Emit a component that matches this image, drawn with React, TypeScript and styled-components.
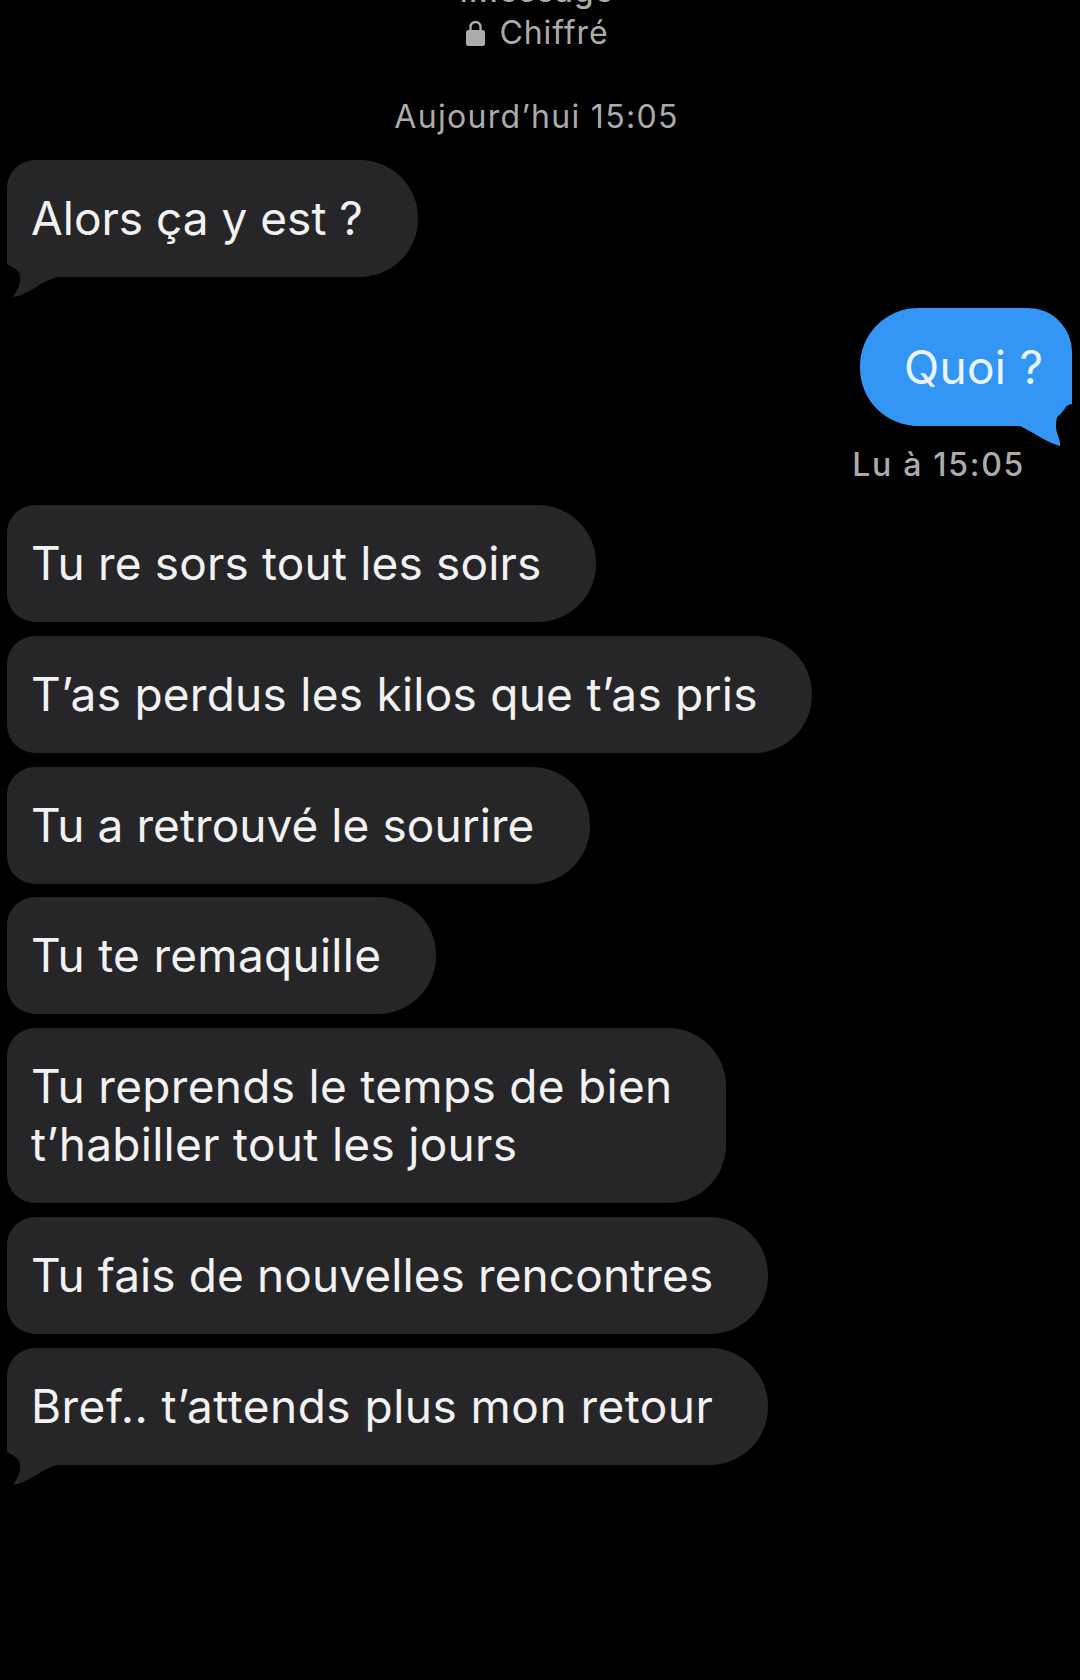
import React from 'react';
import styled, { createGlobalStyle } from 'styled-components';

const Global = createGlobalStyle`
  html, body { margin: 0; padding: 0; background: #000; }
  #root { width: 1080px; height: 1680px; overflow: hidden; }
`;

const Page = styled.main`
  width: 1080px;
  height: 1680px;
  background: #000;
  color: #f1f1f1;
  font-family: Inter, "Liberation Sans", sans-serif;
  display: flex;
  flex-direction: column;
  overflow: hidden;
`;

const Header = styled.header`
  display: flex;
  flex-direction: column;
  align-items: center;
  margin-top: -27px;
  padding-right: 6px;
  color: #ababab;
  font-size: 32px;
  line-height: 36px;
  letter-spacing: 0.9px;
`;

const ServiceLabel = styled.div`
  font-weight: 500;
`;

const Encrypted = styled.div`
  display: flex;
  align-items: center;
  gap: 15px;
  margin-top: 6px;
`;

const Stamp = styled.div`
  margin-top: 48px;
  padding-right: 7px;
  text-align: center;
  color: #ababab;
  font-size: 32px;
  line-height: 36px;
  letter-spacing: 1.3px;
`;

const Thread = styled.section`
  display: flex;
  flex-direction: column;
  gap: 13.7px;
  margin-top: 25px;
`;

const Bubble = styled.div<{ $w: number; $tail?: boolean; $track?: number }>`
  position: relative;
  box-sizing: border-box;
  width: ${p => p.$w}px;
  margin-left: 7px;
  padding: 29px 0 30px 24px;
  background: #262629;
  border-radius: 28px 58px 58px ${p => (p.$tail ? '40px' : '28px')};
  font-size: 46px;
  line-height: 58px;
  letter-spacing: ${p => p.$track ?? 0}px;
  white-space: nowrap;
`;

const SentRow = styled.div`
  display: flex;
  flex-direction: column;
  align-items: flex-end;
  padding-right: 8px;
  margin: 17px 0 9px;
`;

const SentBubble = styled.div`
  position: relative;
  box-sizing: border-box;
  width: 212px;
  height: 118px;
  padding: 30px 0 0 44px;
  background: #3396f4;
  border-radius: 58px 44px 40px 58px;
  font-size: 46px;
  line-height: 58px;
  letter-spacing: 0.3px;
  color: #eaf4ff;
`;

const ReadLabel = styled.div`
  align-self: flex-end;
  margin: 21px 47px 0 0;
  font-size: 32px;
  line-height: 36px;
  letter-spacing: 1.7px;
  font-weight: 500;
  color: #ababab;
`;

const Tail = styled.svg<{ $side: 'left' | 'right' }>`
  position: absolute;
  display: block;
  bottom: -21px;
  ${p => (p.$side === 'left' ? 'left: 0;' : 'right: 0;')}
`;

const LockIcon = () => (
  <svg width="19" height="26" viewBox="0 0 19 26" aria-hidden="true">
    <path d="M4.5 12V7a5 5 0 0 1 10 0V12" fill="none" stroke="#ababab" strokeWidth="2.4" />
    <rect x="0" y="10" width="19" height="16" rx="2.5" fill="#ababab" />
  </svg>
);

const ReceivedTail = () => (
  <Tail $side="left" width="60" height="61" viewBox="0 0 60 61" aria-hidden="true">
    <path d="M0 0 L0 27 C4 30 13 32 13 40 C14 47 10 54 6 60 C22 58 34 44 50 40 L60 40 L60 0 Z" fill="#262629" />
  </Tail>
);

const SentTail = () => (
  <Tail $side="right" width="72" height="61" viewBox="0 0 72 61" aria-hidden="true">
    <path d="M72 0 L72 18 C62 20 56 28 56 40 C56 48 61 54 60 60 C48 57 36 48 20 40 L0 40 L0 0 Z" fill="#3396f4" />
  </Tail>
);

const received = [
  { t: "Tu re sors tout les soirs", w: 589, track: 0.17 },
  { t: "T’as perdus les kilos que t’as pris", w: 805, track: 0.25 },
  { t: "Tu a retrouvé le sourire", w: 583, track: 0.05 },
  { t: "Tu te remaquille", w: 429, track: 0.27 },
];

export default function App() {
  return (
    <Page>
      <Global />
      <Header>
        <ServiceLabel>iMessage</ServiceLabel>
        <Encrypted><LockIcon />Chiffré</Encrypted>
      </Header>
      <Stamp>Aujourd’hui 15:05</Stamp>
      <Thread>
        <Bubble $w={411} $tail>Alors ça y est ?<ReceivedTail /></Bubble>
        <SentRow>
          <SentBubble>Quoi ?<SentTail /></SentBubble>
          <ReadLabel>Lu à 15:05</ReadLabel>
        </SentRow>
        {received.map(r => <Bubble key={r.t} $w={r.w} $track={r.track}>{r.t}</Bubble>)}
        <Bubble $w={719} $track={0.3}>Tu reprends le temps de bien<br />t’habiller tout les jours</Bubble>
        <Bubble $w={761} $track={0.1}>Tu fais de nouvelles rencontres</Bubble>
        <Bubble $w={761} $tail $track={0.47}>Bref.. t’attends plus mon retour<ReceivedTail /></Bubble>
      </Thread>
    </Page>
  );
}
